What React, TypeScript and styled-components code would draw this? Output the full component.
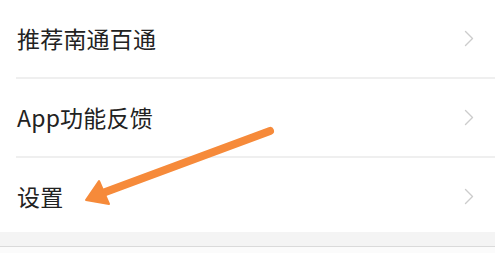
import React from "react";
import styled, { createGlobalStyle } from "styled-components";

const GlobalStyle = createGlobalStyle`
  html, body {
    margin: 0;
    padding: 0;
    background: #ffffff;
  }
  body {
    font-family: "Noto Sans CJK SC", "Noto Sans", sans-serif;
  }
`;

const Page = styled.div`
  position: relative;
  width: 495px;
  height: 253px;
  overflow: hidden;
  background: #ffffff;
`;

const List = styled.div`
  display: flex;
  flex-direction: column;
  height: 232px;
  overflow: hidden;
  background: #ffffff;
`;

const Row = styled.div<{ $divider?: boolean }>`
  flex: 0 0 auto;
  height: 77px;
  display: flex;
  align-items: center;
  justify-content: space-between;
  padding: 0 21px 0 17px;
  position: relative;
  ${(p) =>
    p.$divider &&
    `
    &::after {
      content: "";
      position: absolute;
      left: 16px;
      right: 0;
      bottom: -2px;
      height: 2px;
      background: #efefef;
    }
  `}
  margin-bottom: ${(p) => (p.$divider ? "2px" : "0")};
`;

const Label = styled.span`
  font-size: 23px;
  line-height: 1;
  color: #222222;
  letter-spacing: 0.2px;
`;

const Chevron = styled.svg`
  width: 10px;
  height: 17px;
  display: block;
`;

const Footer = styled.div`
  height: 14px;
  background: #f4f4f4;
  border-bottom: 1px solid #dadada;
`;

const Rest = styled.div`
  height: 6px;
  background: #fbfbfb;
`;

const ArrowOverlay = styled.svg`
  position: absolute;
  left: 0;
  top: 0;
  width: 495px;
  height: 253px;
  pointer-events: none;
`;

const items = ["推荐南通百通", "App功能反馈", "设置"];

export default function App() {
  return (
    <>
      <GlobalStyle />
      <Page>
        <List>
          {items.map((label, i) => (
            <Row key={label} $divider={i < items.length - 1}>
              <Label>{label}</Label>
              <Chevron viewBox="0 0 10 17">
                <path
                  d="M1.5 1.5 L8.5 8.5 L1.5 15.5"
                  fill="none"
                  stroke="#cccccc"
                  strokeWidth="1.4"
                  strokeLinejoin="round"
                  strokeLinecap="round"
                />
              </Chevron>
            </Row>
          ))}
        </List>
        <Footer />
        <Rest />
        <ArrowOverlay viewBox="0 0 495 253">
          <line
            x1="270"
            y1="131"
            x2="100"
            y2="194"
            stroke="#f68a3a"
            strokeWidth="8"
            strokeLinecap="round"
          />
          <polygon
            points="86,200 99,181 109,204"
            fill="#f68a3a"
            stroke="#f68a3a"
            strokeWidth="2"
            strokeLinejoin="round"
          />
        </ArrowOverlay>
      </Page>
    </>
  );
}
